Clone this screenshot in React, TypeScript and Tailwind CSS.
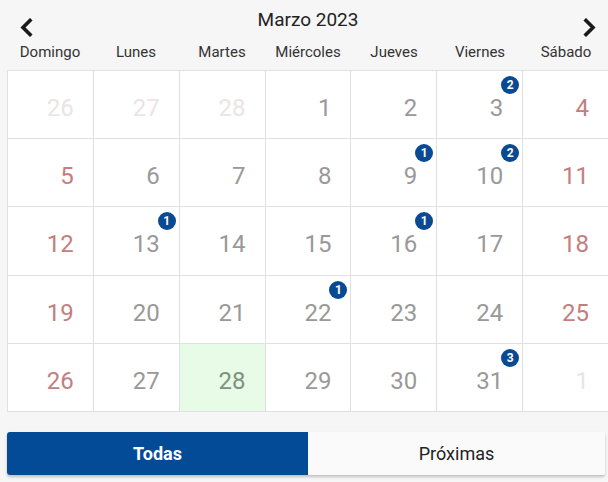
import React from "react";

type Cell = { d: number; kind: "other" | "week" | "weekend" | "today"; badge?: number };

const rows: Cell[][] = [
  [
    { d: 26, kind: "other" },
    { d: 27, kind: "other" },
    { d: 28, kind: "other" },
    { d: 1, kind: "week" },
    { d: 2, kind: "week" },
    { d: 3, kind: "week", badge: 2 },
    { d: 4, kind: "weekend" },
  ],
  [
    { d: 5, kind: "weekend" },
    { d: 6, kind: "week" },
    { d: 7, kind: "week" },
    { d: 8, kind: "week" },
    { d: 9, kind: "week", badge: 1 },
    { d: 10, kind: "week", badge: 2 },
    { d: 11, kind: "weekend" },
  ],
  [
    { d: 12, kind: "weekend" },
    { d: 13, kind: "week", badge: 1 },
    { d: 14, kind: "week" },
    { d: 15, kind: "week" },
    { d: 16, kind: "week", badge: 1 },
    { d: 17, kind: "week" },
    { d: 18, kind: "weekend" },
  ],
  [
    { d: 19, kind: "weekend" },
    { d: 20, kind: "week" },
    { d: 21, kind: "week" },
    { d: 22, kind: "week", badge: 1 },
    { d: 23, kind: "week" },
    { d: 24, kind: "week" },
    { d: 25, kind: "weekend" },
  ],
  [
    { d: 26, kind: "weekend" },
    { d: 27, kind: "week" },
    { d: 28, kind: "today" },
    { d: 29, kind: "week" },
    { d: 30, kind: "week" },
    { d: 31, kind: "week", badge: 3 },
    { d: 1, kind: "other" },
  ],
];

const days = ["Domingo", "Lunes", "Martes", "Miércoles", "Jueves", "Viernes", "Sábado"];

function Chevron({ dir }: { dir: "left" | "right" }) {
  return (
    <svg width="14" height="19" viewBox="0 0 14 19" className="block">
      <path
        d={dir === "left" ? "M11 2.5 L4 9.5 L11 16.5" : "M3 2.5 L10 9.5 L3 16.5"}
        fill="none"
        stroke="#1a1a1a"
        strokeWidth="3.6"
        strokeLinecap="square"
        strokeLinejoin="miter"
      />
    </svg>
  );
}

export default function App() {
  return (
    <div
      className="w-[608px] h-[482px] overflow-hidden bg-[#f6f6f6]"
      style={{ fontFamily: "Roboto, 'Liberation Sans', sans-serif" }}
    >
      <div className="flex h-[38px] px-[19px]">
        <div className="mt-[18px]">
          <Chevron dir="left" />
        </div>
        <div className="flex-1 flex items-center justify-center pt-[2px] text-[19px] text-[#222]">
          Marzo 2023
        </div>
        <div className="mt-[18px] mr-[-8px]">
          <Chevron dir="right" />
        </div>
      </div>
      <div className="ml-[7px] w-[602px] grid grid-cols-7 h-[28px] items-center">
        {days.map((d) => (
          <div key={d} className="text-center text-[15px] text-[#333] pt-[1px]">
            {d}
          </div>
        ))}
      </div>
      <div className="ml-[7px] mt-[4px] w-[602px] grid grid-cols-7 border-l border-t border-[#e0e0e0] bg-white">
        {rows.flat().map((c, i) => {
          const color =
            c.kind === "other"
              ? "text-[#ebe4e4]"
              : c.kind === "weekend"
              ? "text-[#c47e7e]"
              : c.kind === "today"
              ? "text-[#7f917f]"
              : "text-[#999999]";
          return (
            <div
              key={i}
              className={`h-[68.2px] border-r border-b border-[#e0e0e0] flex justify-end items-start pt-[23px] pr-[19px] ${
                c.kind === "today" ? "bg-[#e7fbe6]" : ""
              }`}
            >
              <span className={`relative text-[24px] leading-[28px] ${color}`}>
                {c.d}
                {c.badge ? (
                  <span className="absolute top-[-18px] right-[-16px] w-[18px] h-[18px] rounded-full bg-[#0a4a93] text-white text-[12px] font-bold leading-[18px] text-center">
                    {c.badge}
                  </span>
                ) : null}
              </span>
            </div>
          );
        })}
      </div>
      <div className="ml-[7px] mt-[20px] w-[598px] h-[43px] flex rounded-[3px] overflow-hidden shadow-[0_2px_3px_rgba(0,0,0,0.22)]">
        <div className="w-[301px] bg-[#034b97] text-white font-bold text-[18px] flex items-center justify-center">
          Todas
        </div>
        <div className="flex-1 bg-[#fafafa] text-[#222] text-[18px] flex items-center justify-center">
          Próximas
        </div>
      </div>
    </div>
  );
}
